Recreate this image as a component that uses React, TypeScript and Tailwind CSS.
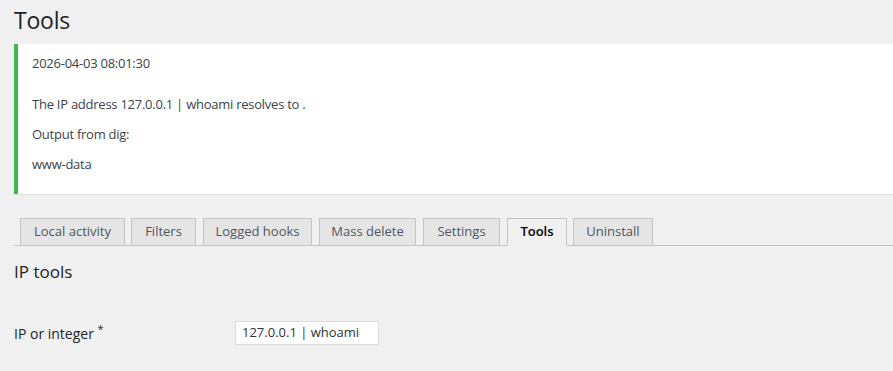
import React from "react";

const tabs = [
  { label: "Local activity", w: 105, ml: 0 },
  { label: "Filters", w: 65, ml: 6 },
  { label: "Logged hooks", w: 109, ml: 7 },
  { label: "Mass delete", w: 97, ml: 7 },
  { label: "Settings", w: 77, ml: 7 },
  { label: "Tools", w: 60, ml: 7, active: true },
  { label: "Uninstall", w: 80, ml: 6 },
];

export default function App() {
  return (
    <div
      className="w-[893px] h-[371px] overflow-hidden bg-[#f0f0f1] text-[#3c434a]"
      style={{ fontFamily: '"Open Sans", "Noto Sans", sans-serif' }}
    >
      <div className="pl-[14px]">
        <h1 className="text-[23px] leading-[29px] pt-[6px] text-[#1d2327] tracking-[-0.2px]">Tools</h1>
        <div className="mt-[9px] bg-white border-l-4 border-[#46b450] shadow-[0_1px_1px_rgba(0,0,0,0.06)] h-[150px] pl-[14px] pt-[9px] text-[13px] leading-[20px] tracking-[-0.25px] mr-[-20px]">
          <p>2026-04-03 08:01:30</p>
          <p className="mt-[21px]">The IP address 127.0.0.1 | whoami resolves to .</p>
          <p className="mt-[10px]">Output from dig:</p>
          <p className="mt-[10px]">www-data</p>
        </div>
        <div className="mt-[24px] flex items-end border-b border-[#c3c4c7] pl-[6px] h-[28px]">
          {tabs.map((t) => (
            <div
              key={t.label}
              style={{ width: t.w, marginLeft: t.ml }}
              className={
                "h-[28px] border border-[#c3c4c7] text-[13px] flex items-center justify-center mb-[-1px] " +
                (t.active
                  ? "bg-[#f0f0f1] border-b-[#f0f0f1] text-black font-semibold"
                  : "bg-[#e5e5e5] border-b-[#c3c4c7] text-[#50575e] font-medium")
              }
            >
              {t.label}
            </div>
          ))}
        </div>
        <h2 className="mt-[14px] text-[17px] leading-[24px] text-[#1d2327]">IP tools</h2>
        <div className="mt-[37px] flex items-center">
          <label className="w-[221px] text-[14px] text-[#1d2327] font-medium">
            IP or integer <sup className="text-[11px]">*</sup>
          </label>
          <div className="w-[144px] h-[24px] bg-white border border-[#dcdcde] text-[13px] text-[#2c3338] flex items-center pl-[6px]">
            127.0.0.1 | whoami
          </div>
        </div>
      </div>
    </div>
  );
}
